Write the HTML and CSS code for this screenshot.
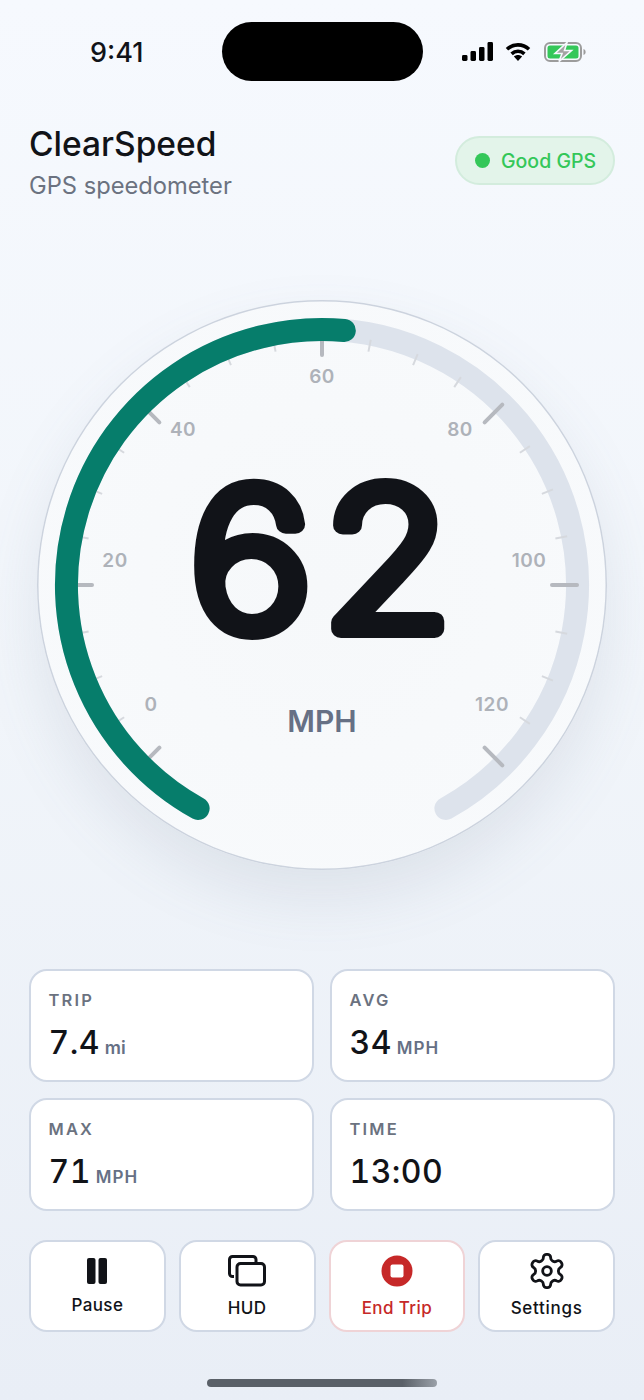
FILE: index.html
```html
<!DOCTYPE html>
<html lang="en">
<head>
    <meta charset="UTF-8">
    <meta name="viewport" content="width=device-width, initial-scale=1.0">
    <title>ClearSpeed</title>
    <link rel="stylesheet" href="styles.css">
</head>
<body>
    <div class="screen">
        <div class="status-bar">
            <span class="clock">9:41</span>
            <div class="island"></div>
            <div class="status-icons">
                <svg class="signal" viewBox="0 0 31 19" width="31" height="19">
                    <rect x="0" y="13" width="5.5" height="6" rx="1.4"/>
                    <rect x="8.5" y="9" width="5.5" height="10" rx="1.4"/>
                    <rect x="17" y="5" width="5.5" height="14" rx="1.4"/>
                    <rect x="25.5" y="0" width="5.5" height="19" rx="1.4"/>
                </svg>
                <svg class="wifi" viewBox="0 0 26 19" width="26" height="19">
                    <path class="wifi-arc" d="M2 7.2C8.2 1.4 17.8 1.4 24 7.2"/>
                    <path class="wifi-arc" d="M6.6 11.8C10.3 8.4 15.7 8.4 19.4 11.8"/>
                    <path d="M8.9 14.6C11.3 12.6 14.7 12.6 17.1 14.6L13 19Z"/>
                </svg>
                <svg class="battery" viewBox="0 0 42 20" width="42" height="20">
                    <rect class="battery-case" x="1" y="1" width="36" height="18" rx="5"/>
                    <rect class="battery-fill" x="3.5" y="3.5" width="31" height="13" rx="2.5"/>
                    <path class="battery-bolt" d="M23 0.5L11 11.5H18L15 19.5L27.5 8.5H20.5Z"/>
                    <path class="battery-nub" d="M39.5 7C41 7.6 41.6 8.6 41.6 10S41 12.4 39.5 13Z"/>
                </svg>
            </div>
        </div>

        <header class="app-header">
            <div>
                <h1>ClearSpeed</h1>
                <p class="subtitle">GPS speedometer</p>
            </div>
            <div class="gps-pill"><span class="gps-dot"></span>Good GPS</div>
        </header>

        <div class="dial">
            <svg viewBox="0 0 570 570" width="570" height="570">
                <path class="track" d="M161.1 508.5A255.5 255.5 0 1 1 408.9 508.5"/>

                <!-- minor ticks -->
                <g class="tick-minor">
                    <line x1="285" y1="35" x2="285" y2="47" transform="rotate(236.25 285 285)"/>
                    <line x1="285" y1="35" x2="285" y2="47" transform="rotate(247.5 285 285)"/>
                    <line x1="285" y1="35" x2="285" y2="47" transform="rotate(258.75 285 285)"/>
                    <line x1="285" y1="35" x2="285" y2="47" transform="rotate(281.25 285 285)"/>
                    <line x1="285" y1="35" x2="285" y2="47" transform="rotate(292.5 285 285)"/>
                    <line x1="285" y1="35" x2="285" y2="47" transform="rotate(303.75 285 285)"/>
                    <line x1="285" y1="35" x2="285" y2="47" transform="rotate(326.25 285 285)"/>
                    <line x1="285" y1="35" x2="285" y2="47" transform="rotate(337.5 285 285)"/>
                    <line x1="285" y1="35" x2="285" y2="47" transform="rotate(348.75 285 285)"/>
                    <line x1="285" y1="35" x2="285" y2="47" transform="rotate(11.25 285 285)"/>
                    <line x1="285" y1="35" x2="285" y2="47" transform="rotate(22.5 285 285)"/>
                    <line x1="285" y1="35" x2="285" y2="47" transform="rotate(33.75 285 285)"/>
                    <line x1="285" y1="35" x2="285" y2="47" transform="rotate(56.25 285 285)"/>
                    <line x1="285" y1="35" x2="285" y2="47" transform="rotate(67.5 285 285)"/>
                    <line x1="285" y1="35" x2="285" y2="47" transform="rotate(78.75 285 285)"/>
                    <line x1="285" y1="35" x2="285" y2="47" transform="rotate(101.25 285 285)"/>
                    <line x1="285" y1="35" x2="285" y2="47" transform="rotate(112.5 285 285)"/>
                    <line x1="285" y1="35" x2="285" y2="47" transform="rotate(123.75 285 285)"/>
                </g>

                <!-- major ticks -->
                <g class="tick-major">
                    <line x1="285" y1="30" x2="285" y2="55" transform="rotate(225 285 285)"/>
                    <line x1="285" y1="30" x2="285" y2="55" transform="rotate(270 285 285)"/>
                    <line x1="285" y1="30" x2="285" y2="55" transform="rotate(315 285 285)"/>
                    <line x1="285" y1="30" x2="285" y2="55"/>
                    <line x1="285" y1="30" x2="285" y2="55" transform="rotate(45 285 285)"/>
                    <line x1="285" y1="30" x2="285" y2="55" transform="rotate(90 285 285)"/>
                    <line x1="285" y1="30" x2="285" y2="55" transform="rotate(135 285 285)"/>
                </g>

                <path class="progress" d="M161.1 508.5A255.5 255.5 0 0 1 307.3 30.5"/>

                <g class="scale">
                    <text x="114" y="411">0</text>
                    <text x="78" y="267">20</text>
                    <text x="146" y="136">40</text>
                    <text x="285" y="83">60</text>
                    <text x="423" y="136">80</text>
                    <text x="492" y="267">100</text>
                    <text x="455" y="411">120</text>
                </g>

                <text class="speed" x="289" y="329">62</text>
                <text class="speed-unit" x="285" y="432">MPH</text>
            </svg>
        </div>

        <div class="stats">
            <div class="stat">
                <div class="stat-label">TRIP</div>
                <div class="stat-value">7.4<span class="unit-lower">mi</span></div>
            </div>
            <div class="stat">
                <div class="stat-label">AVG</div>
                <div class="stat-value">34<span class="unit">MPH</span></div>
            </div>
            <div class="stat">
                <div class="stat-label">MAX</div>
                <div class="stat-value">71<span class="unit">MPH</span></div>
            </div>
            <div class="stat">
                <div class="stat-label">TIME</div>
                <div class="stat-value">13:00</div>
            </div>
        </div>

        <div class="actions">
            <button class="action">
                <svg viewBox="0 0 20 26" width="20" height="26">
                    <rect x="0" y="0" width="8.5" height="26" rx="2"/>
                    <rect x="11.5" y="0" width="8.5" height="26" rx="2"/>
                </svg>
                <span>Pause</span>
            </button>
            <button class="action">
                <svg class="line-icon" viewBox="0 0 38 32" width="38" height="32">
                    <path d="M6 21.5H4.5A3 3 0 0 1 1.5 18.5V4.5A3 3 0 0 1 4.5 1.5H25A3 3 0 0 1 28 4.5V8"/>
                    <rect x="9" y="8.5" width="27.5" height="21.5" rx="3.5"/>
                </svg>
                <span>HUD</span>
            </button>
            <button class="action action-end">
                <svg viewBox="0 0 32 32" width="32" height="32">
                    <circle class="stop-disc" cx="16" cy="16" r="15.5"/>
                    <rect class="stop-square" x="9.5" y="9.5" width="13" height="13" rx="2"/>
                </svg>
                <span>End Trip</span>
            </button>
            <button class="action">
                <svg class="line-icon gear" viewBox="0 0 24 24" width="40" height="40">
                    <path d="M12.22 2h-.44a2 2 0 0 0-2 2v.18a2 2 0 0 1-1 1.73l-.43.25a2 2 0 0 1-2 0l-.15-.08a2 2 0 0 0-2.73.73l-.22.38a2 2 0 0 0 .73 2.73l.15.1a2 2 0 0 1 1 1.72v.51a2 2 0 0 1-1 1.74l-.15.09a2 2 0 0 0-.73 2.73l.22.38a2 2 0 0 0 2.73.73l.15-.08a2 2 0 0 1 2 0l.43.25a2 2 0 0 1 1 1.73V20a2 2 0 0 0 2 2h.44a2 2 0 0 0 2-2v-.18a2 2 0 0 1 1-1.73l.43-.25a2 2 0 0 1 2 0l.15.08a2 2 0 0 0 2.73-.73l.22-.39a2 2 0 0 0-.73-2.73l-.15-.08a2 2 0 0 1-1-1.74v-.5a2 2 0 0 1 1-1.74l.15-.09a2 2 0 0 0 .73-2.73l-.22-.38a2 2 0 0 0-2.73-.73l-.15.08a2 2 0 0 1-2 0l-.43-.25a2 2 0 0 1-1-1.73V4a2 2 0 0 0-2-2z"/>
                    <circle cx="12" cy="12" r="2.6"/>
                </svg>
                <span class="settings-label">Settings</span>
            </button>
        </div>

        <div class="home-bar"></div>
    </div>
</body>
</html>
```

FILE: styles.css
```css
* {
    box-sizing: border-box;
}
body {
    margin: 0;
    font-family: Inter, "Liberation Sans", sans-serif;
    color: #111318;
}
.screen {
    width: 644px;
    height: 1400px;
    overflow: hidden;
    background: linear-gradient(180deg, #f6f9fe 0%, #f1f5fa 50%, #e9eef6 100%);
}

/* status bar */
.status-bar {
    display: grid;
    grid-template-columns: 1fr 201px 1fr;
    align-items: center;
    padding-top: 22px;
}
.clock {
    height: 59px;
    padding-left: 90px;
    font-size: 27px;
    font-weight: 500;
    line-height: 62px;
}
.island {
    height: 59px;
    background: #000;
    border-radius: 30px;
}
.status-icons {
    display: flex;
    align-items: center;
    justify-content: flex-end;
    gap: 12px;
    padding-right: 58px;
}
.battery {
    margin-left: 1px;
}
.wifi-arc {
    fill: none;
    stroke: #000;
    stroke-width: 3.6;
}
.battery-case {
    fill: none;
    stroke: #9c9c9c;
    stroke-width: 2;
}
.battery-fill {
    fill: #34c759;
}
.battery-bolt {
    fill: #a3a3a3;
    stroke: #f6f9fe;
    stroke-width: 1.6;
}
.battery-nub {
    fill: #9c9c9c;
}

/* header */
.app-header {
    display: flex;
    justify-content: space-between;
    align-items: flex-start;
    height: 76px;
    margin-top: 43px;
    padding: 0 29px;
}
h1 {
    margin: 0;
    font-size: 33.5px;
    font-weight: 500;
    line-height: 40px;
}
.subtitle {
    margin: 8px 0 0;
    font-size: 23.7px;
    line-height: 28px;
    color: #6b7280;
}
.gps-pill {
    display: flex;
    align-items: center;
    gap: 11px;
    width: 160px;
    height: 49px;
    margin-top: 12px;
    padding-left: 18px;
    font-size: 19.5px;
    font-weight: 500;
    color: #34c759;
    background: #e3f4ea;
    border: 2px solid #d3ecdd;
    border-radius: 25px;
}
.gps-dot {
    width: 15px;
    height: 15px;
    background: #34c759;
    border-radius: 50%;
}

/* dial */
.dial {
    width: 570px;
    height: 570px;
    margin: 100px auto 0;
    background: radial-gradient(circle, #f6f8fa 0%, #f8fafc 88%, #fdfeff 92%, #fcfdfe 100%);
    border-radius: 50%;
    box-shadow: inset 0 0 0 1.5px #ccd3de, 0 28px 60px rgba(100, 116, 139, 0.13);
}
.dial svg {
    display: block;
}
.track, .progress {
    fill: none;
    stroke-width: 23;
    stroke-linecap: round;
}
.track {
    stroke: #dde3ec;
}
.progress {
    stroke: #067d6b;
}
.tick-minor line {
    stroke: #d6d9de;
    stroke-width: 2;
}
.tick-major line {
    stroke: #b6b9bf;
    stroke-width: 4;
    stroke-linecap: round;
}
.scale text {
    font-size: 19px;
    font-weight: 600;
    letter-spacing: 0.5px;
    text-anchor: middle;
    fill: #aeb2b9;
}
/* thin weight plus a thick round stroke gives the soft rounded numerals */
.speed {
    font-size: 192px;
    font-weight: 200;
    letter-spacing: 10px;
    text-anchor: middle;
    fill: #111318;
    stroke: #111318;
    stroke-width: 18;
    stroke-linejoin: round;
    stroke-linecap: round;
    transform: scaleX(1.09);
    transform-origin: 285px 0;
}
.speed-unit {
    font-size: 30px;
    font-weight: 600;
    text-anchor: middle;
    fill: #667085;
}

/* stats */
.stats {
    display: grid;
    grid-template-columns: 1fr 1fr;
    grid-auto-rows: 113px;
    gap: 16px;
    margin-top: 99px;
    padding: 0 29px;
}
.stat {
    padding: 19px 17.5px 0;
    background: #fff;
    border: 2px solid #d0d8e5;
    border-radius: 18px;
}
.stat-label {
    font-size: 16.5px;
    font-weight: 600;
    letter-spacing: 2.2px;
    line-height: 20px;
    color: #6b7280;
}
.stat-value {
    margin-top: 13px;
    font-size: 32px;
    font-weight: 500;
    font-variant-numeric: tabular-nums;
    letter-spacing: 0.4px;
    line-height: 40px;
}
.unit, .unit-lower {
    margin-left: 5px;
    font-size: 18px;
    font-weight: 600;
    letter-spacing: 0;
    color: #667085;
}
.unit {
    font-size: 17px;
    letter-spacing: 1px;
}

/* actions */
.actions {
    display: grid;
    grid-template-columns: repeat(4, 1fr);
    gap: 13px;
    margin-top: 29px;
    padding: 0 29px;
}
.action {
    display: flex;
    flex-direction: column;
    align-items: center;
    justify-content: center;
    gap: 11px;
    height: 92px;
    padding: 1px 0 0;
    font-family: inherit;
    font-size: 17px;
    font-weight: 550;
    letter-spacing: 0.4px;
    line-height: 20px;
    color: #111318;
    background: #fff;
    border: 2px solid #d0d8e5;
    border-radius: 18px;
}
.action svg {
    display: block;
    fill: #111318;
}
.action .line-icon {
    fill: none;
    stroke: #111318;
    stroke-width: 3;
}
.action .gear {
    margin: -4px 0;
    stroke-width: 1.7;
}
.settings-label {
    letter-spacing: 0.7px;
}
.action-end {
    color: #c62828;
    border-color: #efd3d6;
}
.action .stop-disc {
    fill: #c62828;
}
.action .stop-square {
    fill: #fff;
}

/* home indicator */
.home-bar {
    width: 230px;
    height: 8px;
    margin: 47px auto 0;
    background: linear-gradient(90deg, #5a6068 0%, #5a6068 85%, #9aa0a8 100%);
    border-radius: 4px;
}
```
